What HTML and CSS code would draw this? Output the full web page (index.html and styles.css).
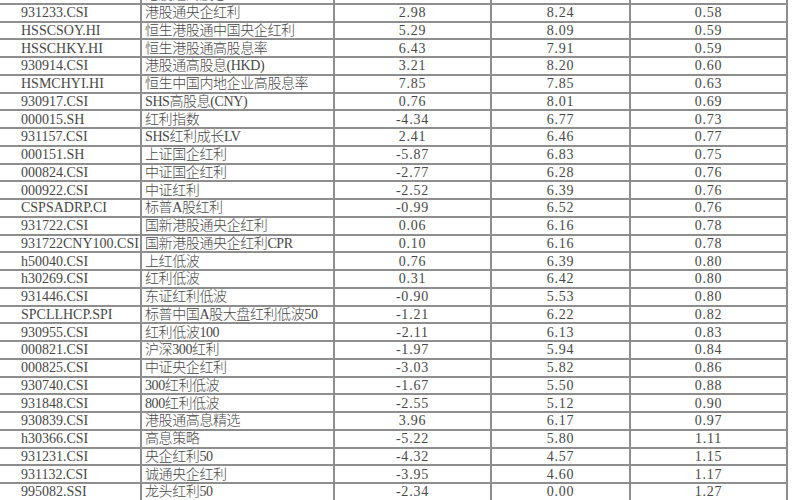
FILE: index.html
```html
<!DOCTYPE html>
<html lang="zh-CN">
<head>
<meta charset="utf-8">
<title>红利指数对比</title>
<link rel="stylesheet" href="styles.css">
</head>
<body>
<table class="grid">
  <colgroup>
    <col class="c-code"><col class="c-name"><col class="c-num"><col class="c-yield"><col class="c-beta">
  </colgroup>
  <tbody>
    <tr><td class="code">930931.CSI</td><td class="name">港股通高股息</td><td class="num">3.12</td><td class="num">8.37</td><td class="num">0.55</td></tr>
    <tr><td class="code">931233.CSI</td><td class="name">港股通央企红利</td><td class="num">2.98</td><td class="num">8.24</td><td class="num">0.58</td></tr>
    <tr><td class="code">HSSCSOY.HI</td><td class="name">恒生港股通中国央企红利</td><td class="num">5.29</td><td class="num">8.09</td><td class="num">0.59</td></tr>
    <tr><td class="code">HSSCHKY.HI</td><td class="name">恒生港股通高股息率</td><td class="num">6.43</td><td class="num">7.91</td><td class="num">0.59</td></tr>
    <tr><td class="code">930914.CSI</td><td class="name">港股通高股息(HKD)</td><td class="num">3.21</td><td class="num">8.20</td><td class="num">0.60</td></tr>
    <tr><td class="code">HSMCHYI.HI</td><td class="name">恒生中国内地企业高股息率</td><td class="num">7.85</td><td class="num">7.85</td><td class="num">0.63</td></tr>
    <tr><td class="code">930917.CSI</td><td class="name">SHS高股息(CNY)</td><td class="num">0.76</td><td class="num">8.01</td><td class="num">0.69</td></tr>
    <tr><td class="code">000015.SH</td><td class="name">红利指数</td><td class="num">-4.34</td><td class="num">6.77</td><td class="num">0.73</td></tr>
    <tr><td class="code">931157.CSI</td><td class="name">SHS红利成长LV</td><td class="num">2.41</td><td class="num">6.46</td><td class="num">0.77</td></tr>
    <tr><td class="code">000151.SH</td><td class="name">上证国企红利</td><td class="num">-5.87</td><td class="num">6.83</td><td class="num">0.75</td></tr>
    <tr><td class="code">000824.CSI</td><td class="name">中证国企红利</td><td class="num">-2.77</td><td class="num">6.28</td><td class="num">0.76</td></tr>
    <tr><td class="code">000922.CSI</td><td class="name">中证红利</td><td class="num">-2.52</td><td class="num">6.39</td><td class="num">0.76</td></tr>
    <tr><td class="code">CSPSADRP.CI</td><td class="name">标普A股红利</td><td class="num">-0.99</td><td class="num">6.52</td><td class="num">0.76</td></tr>
    <tr><td class="code">931722.CSI</td><td class="name">国新港股通央企红利</td><td class="num">0.06</td><td class="num">6.16</td><td class="num">0.78</td></tr>
    <tr><td class="code">931722CNY100.CSI</td><td class="name">国新港股通央企红利CPR</td><td class="num">0.10</td><td class="num">6.16</td><td class="num">0.78</td></tr>
    <tr><td class="code">h50040.CSI</td><td class="name">上红低波</td><td class="num">0.76</td><td class="num">6.39</td><td class="num">0.80</td></tr>
    <tr><td class="code">h30269.CSI</td><td class="name">红利低波</td><td class="num">0.31</td><td class="num">6.42</td><td class="num">0.80</td></tr>
    <tr><td class="code">931446.CSI</td><td class="name">东证红利低波</td><td class="num">-0.90</td><td class="num">5.53</td><td class="num">0.80</td></tr>
    <tr><td class="code">SPCLLHCP.SPI</td><td class="name">标普中国A股大盘红利低波50</td><td class="num">-1.21</td><td class="num">6.22</td><td class="num">0.82</td></tr>
    <tr><td class="code">930955.CSI</td><td class="name">红利低波100</td><td class="num">-2.11</td><td class="num">6.13</td><td class="num">0.83</td></tr>
    <tr><td class="code">000821.CSI</td><td class="name">沪深300红利</td><td class="num">-1.97</td><td class="num">5.94</td><td class="num">0.84</td></tr>
    <tr><td class="code">000825.CSI</td><td class="name">中证央企红利</td><td class="num">-3.03</td><td class="num">5.82</td><td class="num">0.86</td></tr>
    <tr><td class="code">930740.CSI</td><td class="name">300红利低波</td><td class="num">-1.67</td><td class="num">5.50</td><td class="num">0.88</td></tr>
    <tr><td class="code">931848.CSI</td><td class="name">800红利低波</td><td class="num">-2.55</td><td class="num">5.12</td><td class="num">0.90</td></tr>
    <tr><td class="code">930839.CSI</td><td class="name">港股通高息精选</td><td class="num">3.96</td><td class="num">6.17</td><td class="num">0.97</td></tr>
    <tr><td class="code">h30366.CSI</td><td class="name">高息策略</td><td class="num">-5.22</td><td class="num">5.80</td><td class="num">1.11</td></tr>
    <tr><td class="code">931231.CSI</td><td class="name">央企红利50</td><td class="num">-4.32</td><td class="num">4.57</td><td class="num">1.15</td></tr>
    <tr><td class="code">931132.CSI</td><td class="name">诚通央企红利</td><td class="num">-3.95</td><td class="num">4.60</td><td class="num">1.17</td></tr>
    <tr><td class="code">995082.SSI</td><td class="name">龙头红利50</td><td class="num">-2.34</td><td class="num">0.00</td><td class="num">1.27</td></tr>
  </tbody>
</table>
</body>
</html>
```

FILE: styles.css
```css
html, body {
  margin: 0;
  padding: 0;
  background: #ffffff;
  overflow: hidden;
}

body {
  width: 800px;
  height: 500px;
  font-family: "Liberation Serif", "Noto Sans CJK SC", serif;
  font-size: 14px;
  color: #474747;
}

.grid {
  margin: -15px 0 0 -5px;
  width: 793px;
  table-layout: fixed;
  border-collapse: collapse;
}

.c-code { width: 145px; }
.c-name { width: 193px; }
.c-num { width: 157px; }
.c-yield { width: 139px; }
.c-beta { width: 157px; }

.grid td {
  padding: 0;
  height: 15.75px;
  line-height: 15px;
  border: 2px solid #8e8e8e;
  white-space: nowrap;
  overflow: hidden;
  vertical-align: middle;
}

.code {
  padding-left: 24px !important;
  text-align: left;
}

.name {
  padding-left: 3px !important;
  text-align: left;
  letter-spacing: -0.4px;
  font-weight: 300;
}

.num {
  text-align: center;
  letter-spacing: 0.8px;
}
```
